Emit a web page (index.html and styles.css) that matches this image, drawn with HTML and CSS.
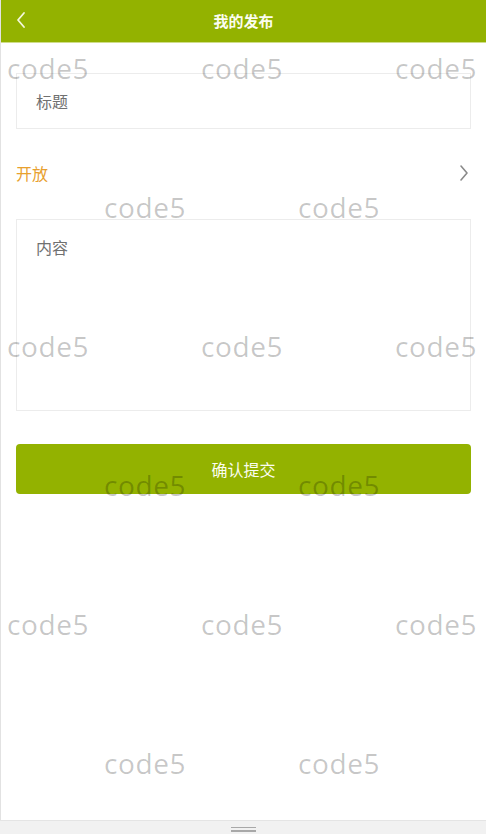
FILE: index.html
```html
<!DOCTYPE html>
<html lang="zh">
<head>
<meta charset="utf-8">
<title>我的发布</title>
<link rel="stylesheet" href="styles.css">
</head>
<body>
<div class="page">
  <header class="topbar">
    <svg class="back" width="12" height="18" viewBox="0 0 12 18"><path d="M9 2 L3 9 L9 16" fill="none" stroke="#f4f8dc" stroke-width="1.8" stroke-linecap="round" stroke-linejoin="round"/></svg>
    <h1 class="title">我的发布</h1>
  </header>
  <main class="form">
    <div class="field field-title">标题</div>
    <div class="row-open">
      <span class="open-label">开放</span>
      <svg width="12" height="18" viewBox="0 0 12 18"><path d="M3 2 L9 9 L3 16" fill="none" stroke="#8a8a8a" stroke-width="1.6" stroke-linecap="round" stroke-linejoin="round"/></svg>
    </div>
    <div class="field field-content">内容</div>
    <button class="submit">确认提交</button>
  </main>
  <div class="watermarks">
    <div class="wm-row"><span>code5</span><span>code5</span><span>code5</span></div>
    <div class="wm-row wm-shift"><span>code5</span><span>code5</span></div>
    <div class="wm-row"><span>code5</span><span>code5</span><span>code5</span></div>
    <div class="wm-row wm-shift"><span>code5</span><span>code5</span></div>
    <div class="wm-row"><span>code5</span><span>code5</span><span>code5</span></div>
    <div class="wm-row wm-shift"><span>code5</span><span>code5</span></div>
  </div>
</div>
<div class="bottombar"><div class="handle"></div></div>
</body>
</html>
```
FILE: styles.css
```css
* { box-sizing: border-box; }
html, body { margin: 0; padding: 0; }
body {
  width: 486px;
  height: 834px;
  overflow: hidden;
  background: #fff;
  font-family: "Noto Sans CJK SC", "Noto Sans", sans-serif;
}
.page {
  position: relative;
  height: 820px;
  border-left: 1px solid #e2e2e2;
  overflow: hidden;
}
.topbar {
  height: 43px;
  background: #93b200;
  border-bottom: 1px solid #cfdd8a;
  display: flex;
  align-items: center;
  justify-content: center;
  position: relative;
}
.back {
  position: absolute;
  left: 14px;
  top: 11px;
}
.title {
  margin: 0;
  font-size: 15px;
  font-weight: 700;
  color: #fbfdf0;
  line-height: 20px;
}
.form {
  padding: 0 15px 0 15px;
  display: flex;
  flex-direction: column;
}
.field {
  border: 1px solid #ececec;
  color: #707070;
  font-size: 16px;
  padding-left: 19px;
}
.field-title {
  margin-top: 30px;
  height: 56px;
  display: flex;
  align-items: center;
}
.row-open {
  margin-top: 22px;
  height: 44px;
  display: flex;
  align-items: center;
  justify-content: space-between;
  padding-right: 1px;
}
.open-label {
  color: #e8a02e;
  font-size: 16px;
}
.field-content {
  margin-top: 24px;
  height: 192px;
  padding-top: 15px;
  line-height: 24px;
}
.submit {
  margin-top: 33px;
  height: 50px;
  border: none;
  border-radius: 4px;
  background: #93b200;
  color: #fbfdf0;
  font-family: "Noto Sans CJK SC", sans-serif;
  font-size: 16px;
  padding: 0;
}
.watermarks {
  position: absolute;
  left: -1px;
  top: 0;
  width: 486px;
  pointer-events: none;
  padding-top: 49px;
  display: flex;
  flex-direction: column;
}
.wm-row {
  height: 139px;
  display: flex;
  padding-left: 7px;
}
.wm-shift { padding-left: 104px; }
.wm-row span {
  width: 194px;
  flex: none;
  font-family: "Open Sans", sans-serif;
  font-size: 28px;
  letter-spacing: 0.6px;
  line-height: 38px;
  color: rgba(0, 0, 0, 0.22);
}
.bottombar {
  height: 14px;
  background: #f1f1f1;
  border-top: 1px solid #e4e4e4;
  display: flex;
  justify-content: center;
  padding-top: 6px;
}
.handle {
  width: 25px;
  height: 5px;
  border-top: 1px solid #a8a8a8;
  border-bottom: 2px solid #a8a8a8;
}
```
